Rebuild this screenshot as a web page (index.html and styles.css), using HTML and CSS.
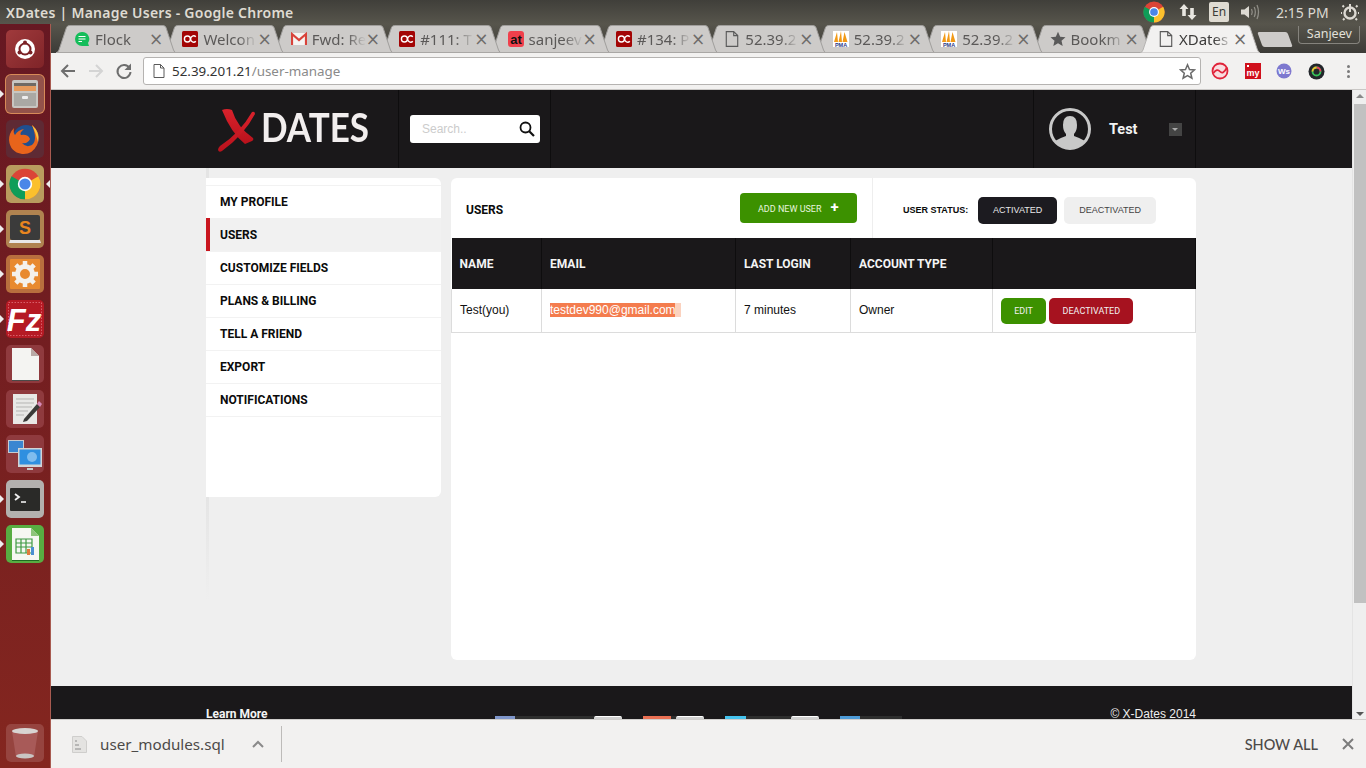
FILE: index.html
```html
<!DOCTYPE html>
<html lang="en">

<head>
    <meta charset="UTF-8">
    <title>XDates | Manage Users</title>
    <link rel="stylesheet" href="styles.css">
</head>

<body>
    <svg class="defs" width="0" height="0">
        <defs>
            <linearGradient id="xred" x1="0" y1="0" x2="0" y2="1">
                <stop offset="0" stop-color="#d9222c" />
                <stop offset="1" stop-color="#b9121c" />
            </linearGradient>
            <symbol id="tabshape" viewBox="0 0 120.4 28">
                <path d="M0 28 Q2 27.5 3 25 L10.5 2.5 Q11.3 .5 13.5 .5 H107 Q109.2 .5 110 2.5 L117.5 25 Q118.5 27.5 120.4 28 Z" />
            </symbol>
            <symbol id="oc" viewBox="0 0 16 16">
                <rect width="16" height="16" rx="1.5" fill="#a30505" />
                <circle cx="5.4" cy="8" r="3" fill="none" stroke="#fff" stroke-width="1.4" />
                <path d="M13.8 5.8 A3 3 0 0 0 8.6 8 A3 3 0 0 0 13.8 10.2" fill="none" stroke="#fff" stroke-width="1.4" />
            </symbol>
            <symbol id="pageicon" viewBox="0 0 12 14">
                <path d="M1 .5 H7.5 L11 4 V13.5 H1 Z M7.5 .5 V4 H11" fill="none" stroke="#5a5a5a" stroke-width="1" />
            </symbol>
            <symbol id="pma" viewBox="0 0 16 16">
                <rect width="16" height="16" fill="#fff" />
                <path d="M1 11 L4 1 L5 11 Z M5.5 11 L8 0 L9 11 Z M9.5 11 L11.5 1 L14.5 11 Z" fill="#f29a16" />
                <text x="8" y="15.6" class="pma-text">PMA</text>
            </symbol>
            <symbol id="chromelogo" viewBox="0 0 24 24">
                <circle cx="12" cy="12" r="11.5" fill="#db4437" />
                <path d="M12 12 L1.9 6.2 A11.5 11.5 0 0 0 12 23.5 Z" fill="#0f9d58" />
                <path d="M12 12 L22 6.2 A11.5 11.5 0 0 1 12 23.5 Z" fill="#fbc02d" />
                <circle cx="12" cy="12" r="5.4" fill="#fff" />
                <circle cx="12" cy="12" r="4.2" fill="#4a86e8" />
            </symbol>
        </defs>
    </svg>

    <div class="topbar">
        <div class="wintitle">XDates | Manage Users - Google Chrome</div>
        <div class="tray">
            <svg class="tray-chrome" width="22" height="22"><use href="#chromelogo" /></svg>
            <svg class="tray-net" width="18" height="18" viewBox="0 0 18 18">
                <path d="M5 1 L9.5 6 H6.8 V13 H3.2 V6 H.5 Z M13 17 L8.5 12 H11.2 V5 H14.8 V12 H17.5 Z" fill="#e8e6e0" />
            </svg>
            <span class="tray-lang">En</span>
            <svg class="tray-vol" width="21" height="18" viewBox="0 0 21 18">
                <path d="M1 6.5 H4.5 L9 3 V15 L4.5 11.5 H1 Z" fill="#dcd9d2" />
                <path d="M11.5 6 Q13 9 11.5 12 M14.2 4 Q16.5 9 14.2 14 M17 2 Q20 9 17 16" fill="none" stroke="#8f8d86" stroke-width="1.3" />
            </svg>
            <span class="tray-time">2:15 PM</span>
            <svg class="tray-power" width="18" height="18" viewBox="0 0 18 18">
                <circle cx="9" cy="10" r="5.5" fill="none" stroke="#dcd9d2" stroke-width="2.4" />
                <path d="M9 1 V9" stroke="#dcd9d2" stroke-width="2" />
                <path d="M3 4 L1.5 2.5 M15 4 L16.5 2.5 M1 10 H0 M17 10 H18 M3.5 15.5 L2 17 M14.5 15.5 L16 17" stroke="#dcd9d2" stroke-width="2" />
            </svg>
        </div>
    </div>

    <div class="desk">
        <div class="launcher">
            <div class="tile tile-ubuntu">
                <svg width="38" height="38" viewBox="0 0 38 38">
                    <circle cx="19" cy="19" r="10" fill="#fff" />
                    <circle cx="19" cy="19" r="5.5" fill="none" stroke="#7b2226" stroke-width="2" />
                    <circle cx="19" cy="12.5" r="2" fill="#7b2226" />
                    <circle cx="13.5" cy="22.5" r="2" fill="#7b2226" />
                    <circle cx="24.5" cy="22.5" r="2" fill="#7b2226" />
                </svg>
            </div>
            <div class="tile tile-files mark-left">
                <svg width="38" height="38" viewBox="0 0 38 38">
                    <rect x="6" y="5" width="26" height="28" rx="2" fill="#c8c6c2" />
                    <rect x="8" y="8" width="22" height="8" fill="#e59a5c" />
                    <rect x="8" y="8" width="22" height="3" fill="#6f6a64" />
                    <rect x="8" y="18" width="22" height="13" fill="#aaa8a4" />
                    <rect x="16" y="21" width="6" height="3" rx="1" fill="#eee" />
                </svg>
            </div>
            <div class="tile tile-firefox">
                <svg width="38" height="38" viewBox="0 0 38 38">
                    <circle cx="20" cy="18" r="13" fill="#1f4f8f" />
                    <path d="M26 5 Q36 14 31 25 Q26 35 16 34 Q4 32 3 20 Q3 13 8 8 Q7 13 9 15 Q12 10 18 9 Q13 13 15 15 Q22 14 24 19 Q22 24 16 23 Q20 28 26 25 Q32 20 26 5 Z" fill="#e8641b" />
                    <path d="M26 5 Q34 12 32 22 Q30 13 26 5 Z" fill="#f9c440" />
                </svg>
            </div>
            <div class="tile tile-chrome mark-both">
                <svg width="38" height="38" viewBox="0 0 38 38"><use href="#chromelogo" x="3" y="3" width="32" height="32" /></svg>
            </div>
            <div class="tile tile-sublime mark-left">
                <svg width="38" height="38" viewBox="0 0 38 38">
                    <rect x="4" y="5" width="30" height="25" rx="2" fill="#3b3b3b" />
                    <path d="M4 30 H34 L35 33 H3 Z" fill="#e8e8e8" />
                    <text x="19" y="24" class="sublime-s">S</text>
                </svg>
            </div>
            <div class="tile tile-settings mark-left">
                <svg width="38" height="38" viewBox="0 0 38 38">
                    <rect x="4" y="4" width="30" height="30" rx="1" fill="#e88a30" />
                    <circle cx="19" cy="19" r="7.5" fill="none" stroke="#f4f1ec" stroke-width="5" />
                    <path d="M19 6 V11 M19 27 V32 M6 19 H11 M27 19 H32 M9.8 9.8 L13.3 13.3 M24.7 24.7 L28.2 28.2 M28.2 9.8 L24.7 13.3 M13.3 24.7 L9.8 28.2" stroke="#f4f1ec" stroke-width="4.5" />
                </svg>
            </div>
            <div class="tile tile-fz mark-left">
                <svg width="38" height="38" viewBox="0 0 38 38">
                    <rect x="2.500" y="2.500" width="33" height="33" fill="none" stroke="#d8606a" stroke-width="1" stroke-dasharray="1.500 1.500" />
                    <text x="18" y="31" class="fz-text">Fz</text>
                </svg>
            </div>
            <div class="tile tile-doc">
                <svg width="38" height="38" viewBox="0 0 38 38">
                    <path d="M6 3 H25 L33 11 V35 H6 Z" fill="#f4f4f2" />
                    <path d="M25 3 L33 11 H25 Z" fill="#b9a9a6" />
                    <path d="M6 35 H33 V36 H6 Z" fill="#4a4a48" />
                </svg>
            </div>
            <div class="tile tile-doc">
                <svg width="38" height="38" viewBox="0 0 38 38">
                    <rect x="7" y="4" width="24" height="30" fill="#e8e8e6" />
                    <path d="M10 9 H28 M10 13 H28 M10 17 H26 M10 21 H22 M10 25 H18" stroke="#b5b5b3" stroke-width="1" />
                    <path d="M18 29 L31 14 L34 17 L21 31 L17 32 Z" fill="#3a3a38" />
                    <path d="M31 14 L33 11 L36 14 L34 17 Z" fill="#d78ab8" />
                </svg>
            </div>
            <div class="tile tile-doc">
                <svg width="38" height="38" viewBox="0 0 38 38">
                    <rect x="2" y="5" width="16" height="13" fill="#c6ccd2" />
                    <rect x="3" y="6" width="14" height="11" fill="#3a86d1" />
                    <rect x="12" y="13" width="24" height="19" fill="#d2d4d6" />
                    <rect x="13.500" y="14.500" width="21" height="15" fill="#2f8fe0" />
                    <circle cx="26" cy="22" r="5" fill="#7fbcee" />
                    <rect x="21" y="33" width="6" height="2" fill="#c9c9c9" />
                </svg>
            </div>
            <div class="tile tile-terminal mark-left">
                <svg width="38" height="38" viewBox="0 0 38 38">
                    <rect x="4" y="8" width="30" height="23" rx="1" fill="#2a2a28" />
                    <path d="M9 14 L13 17 L9 20" fill="none" stroke="#f0f0f0" stroke-width="1.8" />
                    <path d="M15 22 H20" stroke="#f0f0f0" stroke-width="1.6" />
                </svg>
            </div>
            <div class="tile tile-calc mark-left">
                <svg width="38" height="38" viewBox="0 0 38 38">
                    <path d="M6 3 H25 L33 11 V35 H6 Z" fill="#f6f7f2" />
                    <path d="M25 3 L33 11 H25 Z" fill="#8ec47a" />
                    <path d="M6 35 H33 V36 H6 Z" fill="#1f6b22" />
                    <path d="M10 14 H26 V28 H10 Z M10 18 H26 M10 22 H26 M15 14 V28 M20 14 V28" fill="none" stroke="#3f9a42" stroke-width="1.2" />
                    <rect x="21" y="24" width="3" height="6" fill="#e27a3c" />
                    <rect x="25" y="22" width="3" height="8" fill="#4a8fd1" />
                </svg>
            </div>
            <div class="tile tile-trash">
                <svg width="38" height="38" viewBox="0 0 38 38">
                    <path d="M6 7 H32 L28 33 H10 Z" fill="#a85a58" />
                    <ellipse cx="19" cy="7" rx="13" ry="3" fill="#d8d4d2" />
                    <ellipse cx="19" cy="32" rx="9" ry="2.500" fill="#c9c5c3" />
                </svg>
            </div>
        </div>

        <div class="window">
            <div class="tabstrip">
                <div class="tab">
                    <svg class="tab-bg"><use href="#tabshape" /></svg>
                    <svg class="fav" viewBox="0 0 16 16">
                        <path d="M8 1 A7 7 0 1 0 8 15 H15 L14 12 A7 7 0 0 0 8 1 Z" fill="#14bd5a" />
                        <path d="M4.500 5.500 H11.500 M4.500 8 H11.500 M4.500 10.500 H8" stroke="#fff" stroke-width="1.2" />
                    </svg>
                    <span class="tab-title">Flock</span><span class="tab-x">×</span>
                </div>
                <div class="tab">
                    <svg class="tab-bg"><use href="#tabshape" /></svg>
                    <svg class="fav"><use href="#oc" /></svg>
                    <span class="tab-title">Welcon</span><span class="tab-x">×</span>
                </div>
                <div class="tab">
                    <svg class="tab-bg"><use href="#tabshape" /></svg>
                    <svg class="fav" viewBox="0 0 16 16">
                        <rect y="2" width="16" height="12" fill="#f4f4f2" />
                        <path d="M1 14 V3 L8 9 L15 3 V14" fill="none" stroke="#d8433a" stroke-width="2.200" />
                    </svg>
                    <span class="tab-title">Fwd: Re</span><span class="tab-x">×</span>
                </div>
                <div class="tab">
                    <svg class="tab-bg"><use href="#tabshape" /></svg>
                    <svg class="fav"><use href="#oc" /></svg>
                    <span class="tab-title">#111: T</span><span class="tab-x">×</span>
                </div>
                <div class="tab">
                    <svg class="tab-bg"><use href="#tabshape" /></svg>
                    <svg class="fav" viewBox="0 0 16 16">
                        <rect width="16" height="16" rx="3" fill="#f0404c" />
                        <text x="8" y="12.500" class="at-text">at</text>
                    </svg>
                    <span class="tab-title">sanjeev</span><span class="tab-x">×</span>
                </div>
                <div class="tab">
                    <svg class="tab-bg"><use href="#tabshape" /></svg>
                    <svg class="fav"><use href="#oc" /></svg>
                    <span class="tab-title">#134: P</span><span class="tab-x">×</span>
                </div>
                <div class="tab">
                    <svg class="tab-bg"><use href="#tabshape" /></svg>
                    <svg class="fav"><use href="#pageicon" /></svg>
                    <span class="tab-title">52.39.2</span><span class="tab-x">×</span>
                </div>
                <div class="tab">
                    <svg class="tab-bg"><use href="#tabshape" /></svg>
                    <svg class="fav"><use href="#pma" /></svg>
                    <span class="tab-title">52.39.2</span><span class="tab-x">×</span>
                </div>
                <div class="tab">
                    <svg class="tab-bg"><use href="#tabshape" /></svg>
                    <svg class="fav"><use href="#pma" /></svg>
                    <span class="tab-title">52.39.2</span><span class="tab-x">×</span>
                </div>
                <div class="tab">
                    <svg class="tab-bg"><use href="#tabshape" /></svg>
                    <svg class="fav" viewBox="0 0 16 16">
                        <path d="M8 .8 L10.200 5.800 L15.500 6.300 L11.500 9.800 L12.700 15 L8 12.300 L3.300 15 L4.500 9.800 L.5 6.300 L5.800 5.800 Z" fill="#5a5a5a" />
                    </svg>
                    <span class="tab-title">Bookm</span><span class="tab-x">×</span>
                </div>
                <div class="tab tab-active">
                    <svg class="tab-bg"><use href="#tabshape" /></svg>
                    <svg class="fav"><use href="#pageicon" /></svg>
                    <span class="tab-title">XDates</span><span class="tab-x">×</span>
                </div>
                <div class="newtab"></div>
                <div class="profile">Sanjeev</div>
            </div>

            <div class="toolbar">
                <svg class="nav-icon" width="18" height="18" viewBox="0 0 18 18">
                    <path d="M16 9 H3 M9 3 L3 9 L9 15" fill="none" stroke="#6e6e6e" stroke-width="2" />
                </svg>
                <svg class="nav-icon" width="18" height="18" viewBox="0 0 18 18">
                    <path d="M2 9 H15 M9 3 L15 9 L9 15" fill="none" stroke="#d4d4d4" stroke-width="2" />
                </svg>
                <svg class="nav-icon" width="18" height="18" viewBox="0 0 18 18">
                    <path d="M14.500 6 A6.500 6.500 0 1 0 15.500 10" fill="none" stroke="#6e6e6e" stroke-width="2" />
                    <path d="M16 1.500 V8 H9.500 Z" fill="#6e6e6e" />
                </svg>
                <div class="addressbar">
                    <svg class="addr-page" width="12" height="14"><use href="#pageicon" /></svg>
                    <span class="addr-host">52.39.201.21</span><span class="addr-path">/user-manage</span>
                    <svg class="addr-star" width="17" height="17" viewBox="0 0 17 17">
                        <path d="M8.500 1.800 L10.500 6.500 L15.500 6.900 L11.700 10.200 L12.900 15.100 L8.500 12.500 L4.100 15.100 L5.300 10.200 L1.500 6.900 L6.500 6.500 Z" fill="none" stroke="#6a6a6a" stroke-width="1.500" />
                    </svg>
                </div>
                <div class="extensions">
                    <svg width="18" height="18" viewBox="0 0 18 18">
                        <circle cx="9" cy="9" r="7.500" fill="#f9dde0" stroke="#e0243a" stroke-width="1.800" />
                        <path d="M2.500 11 Q6 6 9 9.500 T16 5.500" fill="none" stroke="#e0243a" stroke-width="1.800" />
                    </svg>
                    <svg width="16" height="18" viewBox="0 0 16 18">
                        <rect width="16" height="16" y="1" fill="#d0101c" />
                        <rect x="2" y="3" width="2" height="2" fill="#fff" />
                        <text x="8" y="14" class="my-text">my</text>
                    </svg>
                    <svg width="16" height="16" viewBox="0 0 16 16">
                        <circle cx="8" cy="8" r="7.500" fill="#7d78cf" />
                        <text x="8" y="11" class="ws-text">Ws</text>
                    </svg>
                    <svg width="17" height="17" viewBox="0 0 17 17">
                        <circle cx="8.500" cy="8.500" r="8" fill="#23262b" />
                        <circle cx="8.500" cy="8.500" r="4" fill="none" stroke="#35c25a" stroke-width="1.800" />
                        <path d="M8.500 4.500 A4 4 0 0 1 12.500 8.500" fill="none" stroke="#e8405a" stroke-width="1.800" />
                        <path d="M4.500 8.500 A4 4 0 0 1 8.500 4.500" fill="none" stroke="#e8c030" stroke-width="1.800" />
                    </svg>
                    <div class="menu-dots"><i></i><i></i><i></i></div>
                </div>
            </div>

            <div class="viewport">
                <div class="page">
                    <div class="site-header">
                        <div class="wrap header-row">
                            <div class="logo-cell">
                                <svg class="logo-x" width="38" height="44" viewBox="0 0 38 44">
                                    <path d="M4 1 Q9 -1 14 1 Q19 18 35 29 Q36 31 34 32 L27 35 Q13 24 4 1 Z" fill="url(#xred)" />
                                    <path d="M34 3 Q37 2 37 5 Q26 26 4 42 Q1 44 0 41 Q0 39 2 37 Q22 24 34 3 Z" fill="url(#xred)" />
                                </svg>
                                <span class="logo-text">DATES</span>
                            </div>
                            <div class="search-cell">
                                <div class="searchbox">
                                    <span class="search-ph">Search..</span>
                                    <svg width="16" height="16" viewBox="0 0 16 16">
                                        <circle cx="6.500" cy="6.500" r="5" fill="none" stroke="#111" stroke-width="1.800" />
                                        <path d="M10.200 10.200 L15 15" stroke="#111" stroke-width="2.200" />
                                    </svg>
                                </div>
                            </div>
                            <div class="user-cell">
                                <svg class="avatar" width="42" height="42" viewBox="0 0 42 42">
                                    <circle cx="21" cy="21" r="19.500" fill="#1a181a" stroke="#c8c8c8" stroke-width="3" />
                                    <path d="M21 8 Q28 8 28 17 Q28 23 25 26 V28 Q31 30 36 33 A19 19 0 0 1 6 33 Q11 30 17 28 V26 Q14 23 14 17 Q14 8 21 8 Z" fill="#c8c8c8" />
                                </svg>
                                <span class="user-name">Test</span>
                                <span class="user-caret"></span>
                            </div>
                        </div>
                    </div>

                    <div class="wrap content">
                        <div class="sidebar">
                            <a class="side-item">MY PROFILE</a>
                            <a class="side-item side-active">USERS</a>
                            <a class="side-item">CUSTOMIZE FIELDS</a>
                            <a class="side-item">PLANS &amp; BILLING</a>
                            <a class="side-item">TELL A FRIEND</a>
                            <a class="side-item">EXPORT</a>
                            <a class="side-item">NOTIFICATIONS</a>
                        </div>
                        <div class="panel">
                            <div class="panel-top">
                                <div class="panel-left">
                                    <span class="panel-title">USERS</span>
                                    <button class="btn-add">ADD NEW USER<b>+</b></button>
                                </div>
                                <div class="panel-status">
                                    <span class="status-label">USER STATUS:</span>
                                    <button class="status-btn status-on">ACTIVATED</button>
                                    <button class="status-btn status-off">DEACTIVATED</button>
                                </div>
                            </div>
                            <table class="users">
                                <colgroup>
                                    <col class="c-name">
                                    <col class="c-email">
                                    <col class="c-login">
                                    <col class="c-type">
                                    <col>
                                </colgroup>
                                <thead>
                                    <tr>
                                        <th>NAME</th>
                                        <th>EMAIL</th>
                                        <th>LAST LOGIN</th>
                                        <th>ACCOUNT TYPE</th>
                                        <th></th>
                                    </tr>
                                </thead>
                                <tbody>
                                    <tr>
                                        <td>Test(you)</td>
                                        <td><span class="selected">testdev990@gmail.com</span></td>
                                        <td>7 minutes</td>
                                        <td>Owner</td>
                                        <td class="row-actions">
                                            <button class="row-btn row-edit">EDIT</button>
                                            <button class="row-btn row-deact">DEACTIVATED</button>
                                        </td>
                                    </tr>
                                </tbody>
                            </table>
                        </div>
                    </div>

                    <div class="site-footer">
                        <div class="wrap footer-row">
                            <span class="learn">Learn More</span>
                            <div class="socials">
                                <div class="social social-fb"><i></i><em class="w79"></em><u></u></div>
                                <div class="social social-gp"><i></i><em class="w5"></em><u></u></div>
                                <div class="social social-tw"><i></i><em class="w45"></em><u></u></div>
                                <div class="social social-in"><i></i><em class="w42"></em></div>
                            </div>
                            <span class="copy">© X-Dates 2014</span>
                        </div>
                    </div>
                </div>
                <div class="scrollbar">
                    <span class="arrow-up"></span>
                    <div class="thumb"></div>
                    <span class="arrow-down"></span>
                </div>
            </div>

            <div class="downloads">
                <svg class="dl-file" width="15" height="17" viewBox="0 0 15 17">
                    <path d="M.5 .5 H10 L14.500 5 V16.500 H.5 Z" fill="#e4e3e1" stroke="#cfcecc" />
                    <path d="M3 5 H5 M3 9 H7 M3 13 H9" stroke="#8a8a8a" stroke-width="1" />
                </svg>
                <span class="dl-name">user_modules.sql</span>
                <svg class="dl-chevron" width="12" height="8" viewBox="0 0 12 8">
                    <path d="M1 7 L6 2 L11 7" fill="none" stroke="#8a8a8a" stroke-width="2" />
                </svg>
                <span class="dl-sep"></span>
                <span class="dl-all">SHOW ALL</span>
                <svg class="dl-close" width="12" height="12" viewBox="0 0 12 12">
                    <path d="M1 1 L11 11 M11 1 L1 11" stroke="#7c7c7c" stroke-width="2" />
                </svg>
            </div>
        </div>
    </div>
</body>

</html>
```

FILE: styles.css
```css
* {
    box-sizing: border-box;
}

body {
    display: flex;
    flex-direction: column;
    width: 1366px;
    height: 768px;
    margin: 0;
    overflow: hidden;
    background-color: #efefef;
    font-family: 'Liberation Sans', Arial, sans-serif;
}

.defs {
    position: absolute;
}

.pma-text {
    font: bold 5.500px 'Liberation Sans', sans-serif;
    fill: #2b3a86;
    text-anchor: middle;
}

.at-text {
    font: bold 13px 'Liberation Sans', sans-serif;
    fill: #111;
    text-anchor: middle;
}

.sublime-s {
    font: bold 18px 'Liberation Sans', sans-serif;
    fill: #e8861f;
    text-anchor: middle;
}

.fz-text {
    font: italic bold 31px 'Liberation Sans', sans-serif;
    fill: #fff;
    text-anchor: middle;
}

.my-text {
    font: bold 9px 'Liberation Sans', sans-serif;
    fill: #fff;
    text-anchor: middle;
}

.ws-text {
    font: bold 8px 'Liberation Sans', sans-serif;
    fill: #fff;
    text-anchor: middle;
}

/* ubuntu panel */
.topbar {
    display: flex;
    align-items: center;
    justify-content: space-between;
    flex: none;
    height: 24px;
    padding-left: 6px;
    background: linear-gradient(#403f3a, #57554c);
}

.wintitle {
    font-family: 'Noto Sans', sans-serif;
    font-size: 14px;
    font-weight: 600;
    letter-spacing: .25px;
    color: #dfdbd2;
}

.tray {
    display: flex;
    align-items: center;
    height: 24px;
}

.tray-chrome {
    margin-right: 14px;
}

.tray-net {
    margin-right: 12px;
}

.tray-lang {
    width: 20px;
    height: 20px;
    margin-right: 11px;
    background-color: #dfdbd2;
    border-radius: 2px;
    font-family: 'Noto Sans', sans-serif;
    font-size: 12px;
    line-height: 20px;
    text-align: center;
    color: #3c3b37;
}

.tray-vol {
    margin-right: 15px;
}

.tray-time {
    width: 53px;
    margin-right: 12px;
    font-family: 'Noto Sans', sans-serif;
    font-size: 14px;
    white-space: nowrap;
    color: #dcd9d2;
}

.tray-power {
    margin-right: 7px;
}

.desk {
    display: flex;
    flex: none;
    height: 744px;
}

/* launcher */
.launcher {
    display: flex;
    flex-direction: column;
    flex: none;
    gap: 7px;
    width: 51px;
    padding: 6px 0 6px 6px;
    background: linear-gradient(#661822, #84261f);
    border-right: 1px solid #a85a50;
}

.tile {
    position: relative;
    flex: none;
    width: 38px;
    height: 38px;
    border-radius: 5px;
}

.tile svg {
    display: block;
}

.mark-left::before,
.mark-both::before {
    content: "";
    position: absolute;
    left: -6px;
    top: 15px;
    border: 4px solid transparent;
    border-left-color: #eee;
    border-right-width: 0;
}

.mark-both::after {
    content: "";
    position: absolute;
    right: -6px;
    top: 15px;
    border: 4px solid transparent;
    border-right-color: #eee;
    border-left-width: 0;
}

.tile-ubuntu {
    background: linear-gradient(135deg, #a03a3c, #7f2428);
}

.tile-files {
    background-color: #93524a;
    box-shadow: 0 0 0 1px #d88a58;
}

.tile-firefox {
    background-color: #5e2a34;
}

.tile-chrome {
    background-color: #b99c5e;
}

.tile-sublime {
    background-color: #b08350;
}

.tile-settings {
    background-color: #b86f3e;
}

.tile-fz {
    background-color: #b51a24;
}

.tile-doc {
    background-color: #8f3a3e;
}

.tile-terminal {
    background-color: #b3b0ae;
}

.tile-calc {
    background-color: #58ad42;
}

.tile-trash {
    margin-top: auto;
    background-color: #96443f;
}

/* chrome window */
.window {
    display: flex;
    flex-direction: column;
    flex: 1;
    min-width: 0;
}

.tabstrip {
    display: flex;
    flex: none;
    align-items: flex-start;
    height: 29px;
    padding: 1px 0 0 5px;
    background: linear-gradient(#57554c, #3c3b37);
}

.tab {
    position: relative;
    display: flex;
    align-items: center;
    flex: none;
    width: 120.4px;
    height: 28px;
    margin-right: -12px;
    padding-left: 18px;
}

.tab:nth-child(1) { z-index: 11; }
.tab:nth-child(2) { z-index: 10; }
.tab:nth-child(3) { z-index: 9; }
.tab:nth-child(4) { z-index: 8; }
.tab:nth-child(5) { z-index: 7; }
.tab:nth-child(6) { z-index: 6; }
.tab:nth-child(7) { z-index: 5; }
.tab:nth-child(8) { z-index: 4; }
.tab:nth-child(9) { z-index: 3; }
.tab:nth-child(10) { z-index: 2; }
.tab:nth-child(11) { z-index: 12; }

.tab::after {
    content: "";
    position: absolute;
    left: 0;
    right: 0;
    bottom: 0;
    height: 1px;
    background-color: #a9a7a5;
}

.tab-active::after {
    display: none;
}

.tab-bg {
    position: absolute;
    left: 0;
    top: 0;
    width: 100%;
    height: 100%;
    fill: #cdcbc9;
    stroke: #a09e9c;
    stroke-width: 1;
}

.tab-active .tab-bg {
    fill: #f2f1f0;
    stroke: #b5b3b1;
}

.fav {
    position: relative;
    flex: none;
    width: 16px;
    height: 16px;
}

.tab-title {
    position: relative;
    flex: none;
    width: 54px;
    margin-left: 5px;
    overflow: hidden;
    font-family: 'Noto Sans', sans-serif;
    font-size: 15px;
    white-space: nowrap;
    color: #5b5958;
    -webkit-mask-image: linear-gradient(to right, #000 65%, transparent);
    mask-image: linear-gradient(to right, #000 65%, transparent);
}

.tab-active .tab-title {
    color: #3c3b3a;
}

.tab-x {
    position: relative;
    flex: none;
    width: 12px;
    font-family: 'DejaVu Sans', sans-serif;
    font-size: 17px;
    line-height: 17px;
    text-align: center;
    color: #6e6c6a;
}

.newtab {
    flex: none;
    width: 30px;
    height: 15px;
    margin: 7px 0 0 12px;
    background-color: #cdcbc9;
    transform: skewX(20deg);
    border-radius: 2px;
}

.profile {
    flex: none;
    width: 62px;
    height: 18px;
    margin: 1px 0 0 8px;
    border: 1px solid #85837d;
    border-top: 0;
    border-radius: 0 0 4px 4px;
    font-family: 'Noto Sans', sans-serif;
    font-size: 12.5px;
    line-height: 16px;
    text-align: center;
    color: #e2e0da;
}

.toolbar {
    display: flex;
    align-items: center;
    flex: none;
    height: 37px;
    padding-left: 8px;
    background-color: #f2f1f0;
    border-bottom: 1px solid #c9c7c5;
}

.nav-icon {
    flex: none;
    margin-right: 10px;
}

.addressbar {
    display: flex;
    align-items: center;
    flex: none;
    width: 1058px;
    height: 28px;
    padding: 0 5px 0 9px;
    background-color: #fff;
    border: 1px solid #b5b3b1;
    border-radius: 3px;
    font-family: 'Noto Sans', sans-serif;
    font-size: 13.4px;
}

.addr-page {
    margin-right: 7px;
}

.addr-host {
    color: #333;
}

.addr-path {
    color: #8a8a8a;
}

.addr-star {
    margin-left: auto;
    margin-right: -1px;
}

.extensions {
    display: flex;
    align-items: center;
    flex: 1;
    gap: 15.5px;
    padding-left: 10px;
}

.menu-dots {
    display: flex;
    flex-direction: column;
    gap: 2px;
    margin-left: 7px;
}

.menu-dots i {
    width: 3px;
    height: 3px;
    background-color: #7a7a7a;
    border-radius: 50%;
}

/* web page */
.viewport {
    display: flex;
    flex: none;
    height: 629px;
    overflow: hidden;
}

.page {
    flex: 1;
    min-width: 0;
    height: 100%;
    overflow: hidden;
    background-color: #efefef;
}

.wrap {
    width: 990px;
    margin-left: 155px;
}

.site-header {
    height: 78px;
    background-color: #1a181a;
}

.header-row {
    display: flex;
    height: 78px;
}

.logo-cell {
    display: flex;
    align-items: center;
    flex: none;
    width: 192px;
    padding: 2px 0 0 12px;
}

.logo-x {
    flex: none;
    margin-top: 1px;
}

.logo-text {
    margin: -8px 0 0 5px;
    font-family: Lato, sans-serif;
    font-size: 35px;
    font-weight: 700;
    color: #f2eeee;
    transform: scaleY(1.12);
}

.search-cell {
    flex: none;
    width: 153px;
    height: 78px;
    padding: 25px 0 0 11px;
    border-left: 1px solid #0e0d0e;
    border-right: 1px solid #0e0d0e;
}

.searchbox {
    display: flex;
    align-items: center;
    justify-content: space-between;
    width: 130px;
    height: 28px;
    padding: 0 5px 0 12px;
    background-color: #fff;
    border-radius: 3px;
}

.search-ph {
    font-size: 12px;
    color: #ccc;
}

.user-cell {
    display: flex;
    align-items: center;
    flex: none;
    width: 163px;
    height: 78px;
    margin-left: auto;
    padding-left: 15px;
    border-left: 1px solid #0e0d0e;
    border-right: 1px solid #0e0d0e;
}

.user-name {
    margin-left: 18px;
    font-family: Roboto, sans-serif;
    font-size: 14.5px;
    font-weight: 700;
    color: #f2f2f2;
}

.user-caret {
    position: relative;
    width: 13px;
    height: 13px;
    margin-left: 31px;
    background-color: #444;
}

.user-caret::after {
    content: "";
    position: absolute;
    left: 3px;
    top: 5px;
    border: 3.500px solid transparent;
    border-top-color: #aaa;
    border-bottom-width: 0;
}

.content {
    position: relative;
    display: flex;
    gap: 10px;
    padding: 10px 0 26px;
}

.content::before {
    content: "";
    position: absolute;
    left: 0;
    top: 0;
    width: 3px;
    height: 432px;
    background: linear-gradient(#e4e4e4 75%, #efefef);
}

.sidebar {
    position: relative;
    flex: none;
    width: 235px;
    height: 319px;
    padding-top: 7px;
    background-color: #fff;
    border-radius: 0 6px 6px 0;
}

.side-item {
    display: block;
    height: 33px;
    padding-left: 14px;
    border-top: 1px solid #f2f2f2;
    font-family: Roboto, sans-serif;
    font-size: 12px;
    font-weight: 700;
    line-height: 33px;
    color: #0b0b0b;
}

.side-item:last-child {
    height: 34px;
    border-bottom: 1px solid #f2f2f2;
}

.side-active {
    padding-left: 10px;
    background-color: #f1f1f1;
    border-top: 0;
    border-left: 4px solid #c9161f;
    line-height: 35px;
}

.panel {
    flex: none;
    width: 745px;
    height: 482px;
    overflow: hidden;
    background-color: #fff;
    border-radius: 6px;
}

.panel-top {
    display: flex;
    height: 60px;
}

.panel-left {
    display: flex;
    align-items: center;
    justify-content: space-between;
    flex: none;
    width: 422px;
    padding: 0 15px;
    border-right: 1px solid #eee;
}

.panel-title {
    margin-top: 4px;
    font-family: Roboto, sans-serif;
    font-size: 12px;
    font-weight: 700;
    color: #0b0b0b;
}

button {
    border: none;
    cursor: pointer;
}

.btn-add {
    width: 117px;
    height: 30px;
    padding: 0 0 1px 18px;
    background-color: #3c9100;
    border-radius: 4px;
    font-family: Roboto, sans-serif;
    font-size: 9px;
    text-align: left;
    color: #e8f5df;
}

.btn-add b {
    margin-left: 9px;
    font-size: 15px;
    line-height: 1;
    color: #fff;
}

.panel-status {
    display: flex;
    align-items: center;
    flex: 1;
    padding: 4px 0 0 30px;
}

.status-label {
    margin-right: 10px;
    font-size: 9px;
    font-weight: 700;
    color: #0b0b0b;
}

.status-btn {
    height: 27px;
    border-radius: 5px;
    font-family: 'Liberation Sans', sans-serif;
    font-size: 9px;
}

.status-on {
    width: 79px;
    margin-right: 7px;
    background-color: #1c1b20;
    color: #e8e8e8;
}

.status-off {
    width: 92px;
    background-color: #efefef;
    color: #444;
}

.users {
    width: 745px;
    table-layout: fixed;
    border-collapse: collapse;
}

.c-name {
    width: 90px;
}

.c-email {
    width: 194px;
}

.c-login {
    width: 115px;
}

.c-type {
    width: 142px;
}

.users th {
    height: 51px;
    padding: 0 0 0 8px;
    background-color: #1a181a;
    border-right: 1px solid #0e0d0e;
    font-family: Roboto, sans-serif;
    font-size: 12px;
    font-weight: 700;
    text-align: left;
    color: #f4f4f4;
}

.users td {
    height: 43px;
    padding: 0 0 0 8px;
    border: 1px solid #dcdcdc;
    border-top: 0;
    font-size: 12px;
    color: #111;
}

.users .row-actions {
    padding-top: 2px;
}

.selected {
    padding-right: 5px;
    background: linear-gradient(to right, #f47c4e 125px, #fbd2bf 125px);
    color: #fff;
}

.row-btn {
    height: 26px;
    padding: 0;
    border-radius: 5px;
    font-family: Roboto, sans-serif;
    font-size: 9px;
    color: #f0f0f0;
}

.row-edit {
    width: 45px;
    background-color: #3c9100;
}

.row-deact {
    width: 84px;
    background-color: #a6121f;
}

.site-footer {
    height: 80px;
    background-color: #1a181a;
}

.footer-row {
    display: flex;
    padding-top: 21px;
}

.learn {
    flex: none;
    width: 289px;
    font-family: Roboto, sans-serif;
    font-size: 12px;
    font-weight: 700;
    line-height: 14px;
    color: #f4f4f4;
}

.socials {
    display: flex;
    flex: none;
    gap: 21px;
    width: 495px;
    padding-top: 9px;
}

.social {
    display: flex;
    height: 20px;
}

.social i {
    display: block;
    height: 20px;
}

.social em {
    display: block;
    height: 20px;
    background-color: #2e2e2e;
}

.social u {
    display: block;
    width: 28px;
    height: 20px;
    background-color: #d2d2d2;
    border-top: 1px solid #fff;
    border-radius: 2px 2px 0 0;
}

.social-fb i {
    width: 20px;
    background-color: #7f96cb;
}

.social-gp i {
    width: 28px;
    background-color: #ea7053;
}

.social-tw i {
    width: 21px;
    background-color: #45c3ee;
}

.social-in i {
    width: 20px;
    background-color: #4d9bd8;
}

.w79 {
    width: 79px;
}

.w5 {
    width: 5px;
}

.w45 {
    width: 45px;
}

.w42 {
    width: 42px;
}

.copy {
    flex: 1;
    font-size: 12px;
    line-height: 14px;
    text-align: right;
    color: #eee;
}

.scrollbar {
    position: relative;
    display: flex;
    flex-direction: column;
    align-items: center;
    flex: none;
    width: 14px;
    height: 100%;
    background-color: #efefef;
    border-left: 1px solid #e4e4e4;
}

.thumb {
    width: 12px;
    height: 499px;
    margin-top: 6px;
    background-color: #c1c1c1;
}

.arrow-up {
    margin-top: 4px;
    border: 4px solid transparent;
    border-bottom-color: #8a8a8a;
    border-top-width: 0;
}

.arrow-down {
    margin-top: auto;
    margin-bottom: 3px;
    border: 4px solid transparent;
    border-top-color: #555;
    border-bottom-width: 0;
}

/* download shelf */
.downloads {
    display: flex;
    align-items: center;
    flex: none;
    height: 49px;
    padding-left: 21px;
    background-color: #f2f1f0;
    border-top: 1px solid #d0cecc;
    font-family: 'Noto Sans', sans-serif;
}

.dl-name {
    width: 152px;
    margin-left: 13px;
    font-size: 15.2px;
    white-space: nowrap;
    color: #4c4a48;
}

.dl-chevron {
    flex: none;
}

.dl-sep {
    width: 1px;
    height: 36px;
    margin-left: 17px;
    background-color: #bdbbb9;
}

.dl-all {
    margin-left: auto;
    font-family: Lato, sans-serif;
    font-size: 14.500px;
    font-weight: 500;
    color: #4c4a48;
}

.dl-close {
    margin: 0 12px 0 24px;
}
```
